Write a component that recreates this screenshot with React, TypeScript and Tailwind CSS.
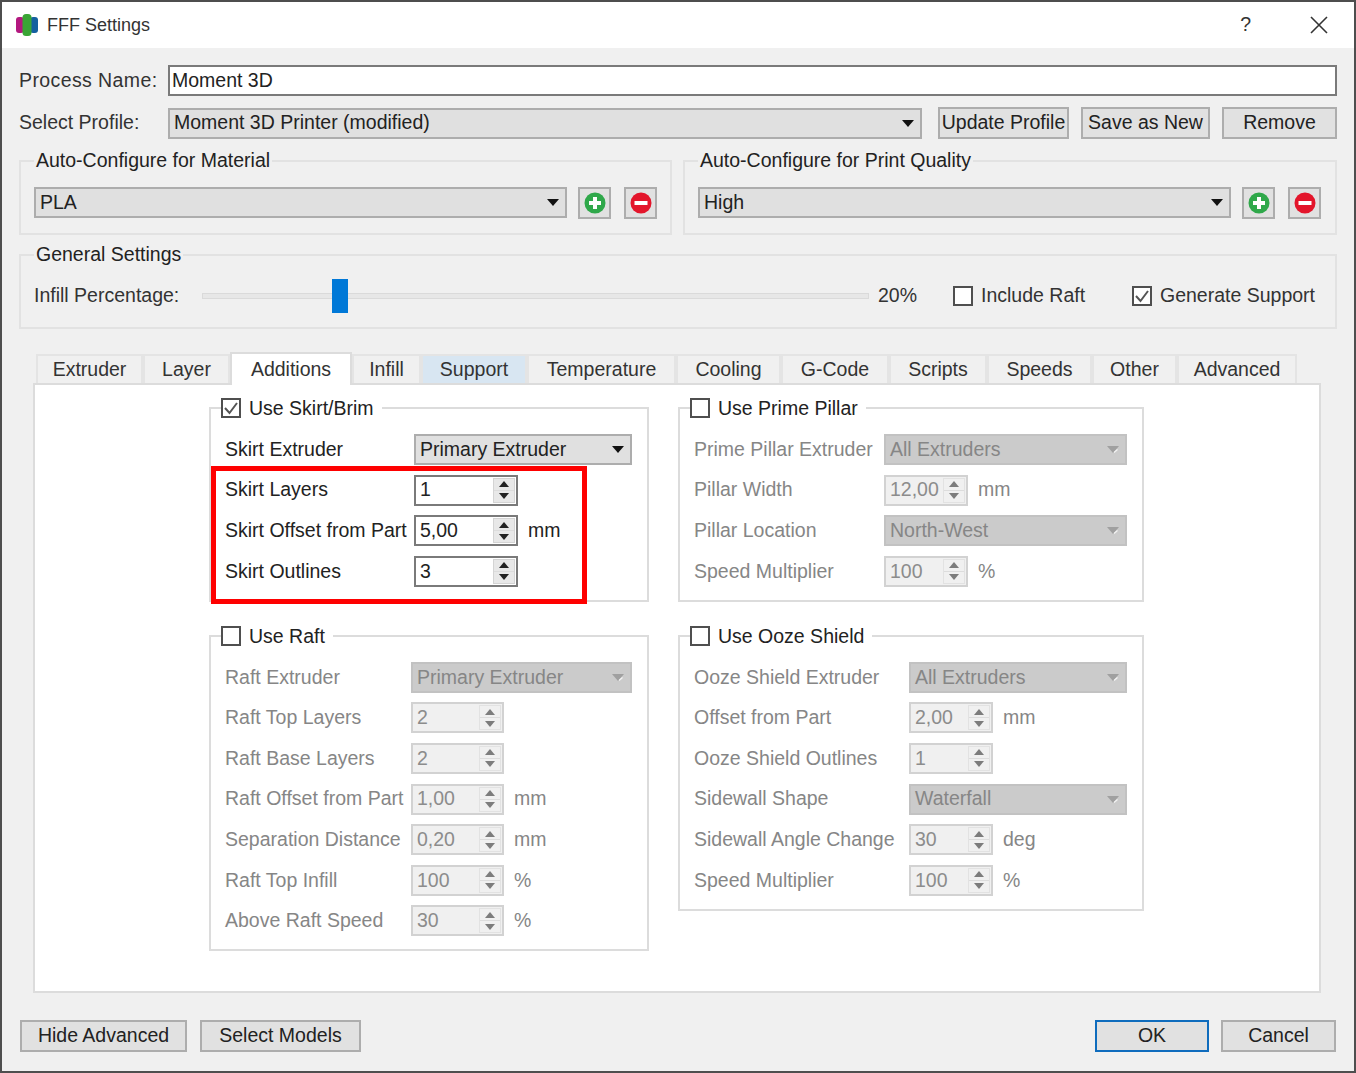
const font = "[font-family:'Liberation_Sans',sans-serif]";

function Caret({ disabled }: { disabled?: boolean }) {
  return (
    <svg width="12" height="7" viewBox="0 0 12 7" className="shrink-0">
      <path d="M0 0h12L6 7z" fill={disabled ? "#a0a0a0" : "#111"} />
      {disabled && <path d="M7 6.5l3.5-3" stroke="#f4f4f4" strokeWidth="1.2" />}
    </svg>
  );
}

function Combo({ value, width, disabled }: { value: string; width: string; disabled?: boolean }) {
  return (
    <div
      className={`flex h-[31px] ${width} items-center justify-between border-2 pl-[4px] pr-[6px] ${
        disabled ? "border-[#c2c2c2] bg-[#cbcbcb] text-[#868686]" : "border-[#adadad] bg-[#e0e0e0] text-[#222]"
      }`}
    >
      <span>{value}</span>
      <Caret disabled={disabled} />
    </div>
  );
}

function Spin({ value, width, disabled }: { value: string; width: string; disabled?: boolean }) {
  const arrow = disabled ? "#7c7c7c" : "#222";
  return (
    <div
      className={`flex h-[31px] ${width} items-center justify-between border-2 pl-[4px] ${
        disabled ? "border-[#d2d2d2] bg-[#f0f0f0] text-[#8c8c8c]" : "border-[#7a7a7a] bg-white text-[#222]"
      }`}
    >
      <span>{value}</span>
      <div className={`mr-[1px] flex h-[25px] w-[22px] flex-col border ${disabled ? "border-[#e2e2e2] bg-[#f0f0f0]" : "border-[#d4d4d4] bg-[#e8e8e8]"}`}>
        <div className="flex flex-1 items-center justify-center border-b border-[#dcdcdc]">
          <svg width="10" height="6" viewBox="0 0 10 6">
            <path d="M5 0l5 6H0z" fill={arrow} />
          </svg>
        </div>
        <div className="flex flex-1 items-center justify-center">
          <svg width="10" height="6" viewBox="0 0 10 6">
            <path d="M0 0h10L5 6z" fill={arrow} />
          </svg>
        </div>
      </div>
    </div>
  );
}

function Check({ checked }: { checked?: boolean }) {
  return (
    <span className="flex h-[20px] w-[20px] shrink-0 items-center justify-center border-2 border-[#4f4f4f] bg-white">
      {checked && (
        <svg width="16" height="14" viewBox="0 0 16 14">
          <path d="M2 7l4.5 5L14 2" fill="none" stroke="#555" strokeWidth="2" />
        </svg>
      )}
    </span>
  );
}

function RoundIcon({ plus }: { plus?: boolean }) {
  return (
    <div className={`flex h-[32px] w-[33px] items-center justify-center border-2 border-[#adadad] bg-[#e1e1e1] ${plus ? "" : "ml-[2px]"}`}>
      <svg width="22" height="22" viewBox="0 0 22 22">
        <circle cx="11" cy="11" r="10.5" fill={plus ? "#2fa84a" : "#e3152b"} />
        {plus ? <path d="M11 5v12M5 11h12" stroke="#fff" strokeWidth="4" /> : <path d="M4.5 11h13" stroke="#fff" strokeWidth="4" />}
      </svg>
    </div>
  );
}

function Button({ label, width, primary }: { label: string; width: string; primary?: boolean }) {
  return (
    <div
      className={`flex h-[32px] ${width} items-center justify-center whitespace-nowrap border-2 text-[#222] ${
        primary ? "border-[#0f6cbd] bg-[#e1e1e1]" : "border-[#adadad] bg-[#e1e1e1]"
      }`}
    >
      {label}
    </div>
  );
}

function Box({ legend, className, children }: { legend: string; className: string; children: React.ReactNode }) {
  return (
    <fieldset className={`border-2 border-[#e2e2e2] ${className}`}>
      <legend className="px-[2px] leading-[22px] text-[#222]">
        <span className="relative -top-[1px]">{legend}</span>
      </legend>
      {children}
    </fieldset>
  );
}

type Row = { label: string; kind: "combo" | "spin"; value: string; unit?: string };

function Group({
  title,
  checked,
  disabled,
  width,
  labelWidth,
  comboWidth,
  spinWidth,
  rows,
}: {
  title: string;
  checked?: boolean;
  disabled?: boolean;
  width: string;
  labelWidth: string;
  comboWidth: string;
  spinWidth: string;
  rows: Row[];
}) {
  const tone = disabled ? "text-[#868686]" : "text-[#222]";
  return (
    <fieldset className={`border-2 border-[#dcdcdc] pb-[13px] pl-[14px] ${width}`}>
      <legend className="-ml-[4px] flex items-center gap-[8px] pr-[8px] leading-[22px] text-[#222]">
        <Check checked={checked} />
        {title}
      </legend>
      <div className="mt-[15px] flex flex-col gap-[9.6px]">
        {rows.map((r) => (
          <div key={r.label} className="flex h-[31px] items-center">
            <span className={`${labelWidth} shrink-0 whitespace-nowrap ${tone}`}>{r.label}</span>
            {r.kind === "combo" ? (
              <Combo value={r.value} width={comboWidth} disabled={disabled} />
            ) : (
              <Spin value={r.value} width={spinWidth} disabled={disabled} />
            )}
            {r.unit && <span className={`ml-[10px] ${tone}`}>{r.unit}</span>}
          </div>
        ))}
      </div>
    </fieldset>
  );
}

const tabs = [
  { label: "Extruder", w: "w-[107px]" },
  { label: "Layer", w: "w-[87px]" },
  { label: "Additions", w: "w-[122px]", active: true },
  { label: "Infill", w: "w-[69px]" },
  { label: "Support", w: "w-[106px]", hot: true },
  { label: "Temperature", w: "w-[149px]" },
  { label: "Cooling", w: "w-[105px]" },
  { label: "G-Code", w: "w-[108px]" },
  { label: "Scripts", w: "w-[98px]" },
  { label: "Speeds", w: "w-[105px]" },
  { label: "Other", w: "w-[85px]" },
  { label: "Advanced", w: "w-[120px]" },
];

export default function App() {
  return (
    <div className={`flex h-[1073px] w-[1356px] flex-col border-2 border-[#4e4e4e] bg-[#f0f0f0] text-[19.5px] leading-none ${font}`}>
      <div className="flex h-[46px] shrink-0 items-center bg-white pl-[13px] pr-[26px] text-[#333]">
        <svg width="24" height="24" viewBox="0 0 24 24" className="shrink-0">
          <rect x="1" y="4" width="8" height="16" rx="3" fill="#b3187f" />
          <rect x="15" y="4" width="8" height="16" rx="3" fill="#14609f" />
          <rect x="7.5" y="1" width="9" height="22" rx="3.5" fill="#3aa535" />
        </svg>
        <span className="ml-[8px] text-[18px]">FFF Settings</span>
        <span className="ml-auto text-[#333]">?</span>
        <svg width="18" height="18" viewBox="0 0 18 18" className="ml-[59px]">
          <path d="M1 1l16 16M17 1L1 17" stroke="#333" strokeWidth="1.6" />
        </svg>
      </div>

      <div className="flex flex-1 flex-col pl-[17px] pr-[17px] pt-[17px]">
        <div className="flex h-[31px] items-center">
          <span className="w-[149px] tracking-[0.4px] text-[#333]">Process Name:</span>
          <div className="flex h-[31px] flex-1 items-center border-2 border-[#7a7a7a] bg-white pl-[2px] text-[#222]">Moment 3D</div>
        </div>
        <div className="mt-[11px] flex h-[32px] items-center">
          <span className="w-[149px] text-[#333]">Select Profile:</span>
          <Combo value="Moment 3D Printer (modified)" width="w-[754px]" />
          <div className="ml-[16px]"><Button label="Update Profile" width="w-[131px]" /></div>
          <div className="ml-[12px]"><Button label="Save as New" width="w-[129px]" /></div>
          <div className="ml-[12px]"><Button label="Remove" width="w-[115px]" /></div>
        </div>

        <div className="mt-[11px] flex gap-[11px]">
          <Box legend="Auto-Configure for Material" className="h-[85px] w-[653px] pl-[13px] pr-[13px]">
            <div className="mt-[15px] flex gap-[11px]">
              <Combo value="PLA" width="w-[533px]" />
              <RoundIcon plus />
              <RoundIcon />
            </div>
          </Box>
          <Box legend="Auto-Configure for Print Quality" className="h-[85px] w-[654px] pl-[13px] pr-[13px]">
            <div className="mt-[15px] flex gap-[11px]">
              <Combo value="High" width="w-[533px]" />
              <RoundIcon plus />
              <RoundIcon />
            </div>
          </Box>
        </div>

        <Box legend="General Settings" className="mt-[9px] h-[85px] w-[1318px] pl-[13px]">
          <div className="mt-[13px] flex h-[34px] items-center text-[#333]">
            <span className="w-[168px]">Infill Percentage:</span>
            <div className="relative flex h-[34px] w-[667px] items-center">
              <div className="h-[6px] w-full border border-[#dadada] bg-[#e7e7e7]" />
              <div className="absolute left-[130px] top-0 h-[34px] w-[16px] bg-[#0078d7]" />
            </div>
            <span className="ml-[9px] w-[75px]">20%</span>
            <Check />
            <span className="ml-[8px] w-[151px]">Include Raft</span>
            <Check checked />
            <span className="ml-[8px]">Generate Support</span>
          </div>
        </Box>

        <div className="ml-[17px] mt-[23px] flex h-[31px] items-end">
          {tabs.map((t) => (
            <div
              key={t.label}
              className={`flex items-center justify-center border-2 border-b-0 text-[#333] ${t.w} ${
                t.active
                  ? "relative z-10 -mb-[2px] h-[33px] border-[#dcdcdc] bg-white"
                  : t.hot
                    ? "h-[29px] border-[#e4e4e4] bg-[#d8e6f2]"
                    : "h-[29px] border-[#e4e4e4] bg-[#f0f0f0]"
              }`}
            >
              {t.label}
            </div>
          ))}
        </div>

        <div className="relative ml-[14px] flex h-[610px] w-[1288px] gap-[29px] border-2 border-[#dcdcdc] bg-white pl-[174px] pt-[12px]">
          <div className="flex flex-col gap-[23px]">
            <Group
              title="Use Skirt/Brim"
              checked
              width="w-[440px]"
              labelWidth="w-[189px]"
              comboWidth="w-[218px]"
              spinWidth="w-[104px]"
              rows={[
                { label: "Skirt Extruder", kind: "combo", value: "Primary Extruder" },
                { label: "Skirt Layers", kind: "spin", value: "1" },
                { label: "Skirt Offset from Part", kind: "spin", value: "5,00", unit: "mm" },
                { label: "Skirt Outlines", kind: "spin", value: "3" },
              ]}
            />
            <Group
              title="Use Raft"
              disabled
              width="w-[440px]"
              labelWidth="w-[186px]"
              comboWidth="w-[221px]"
              spinWidth="w-[93px]"
              rows={[
                { label: "Raft Extruder", kind: "combo", value: "Primary Extruder" },
                { label: "Raft Top Layers", kind: "spin", value: "2" },
                { label: "Raft Base Layers", kind: "spin", value: "2" },
                { label: "Raft Offset from Part", kind: "spin", value: "1,00", unit: "mm" },
                { label: "Separation Distance", kind: "spin", value: "0,20", unit: "mm" },
                { label: "Raft Top Infill", kind: "spin", value: "100", unit: "%" },
                { label: "Above Raft Speed", kind: "spin", value: "30", unit: "%" },
              ]}
            />
          </div>
          <div className="flex flex-col gap-[23px]">
            <Group
              title="Use Prime Pillar"
              disabled
              width="w-[466px]"
              labelWidth="w-[190px]"
              comboWidth="w-[243px]"
              spinWidth="w-[84px]"
              rows={[
                { label: "Prime Pillar Extruder", kind: "combo", value: "All Extruders" },
                { label: "Pillar Width", kind: "spin", value: "12,00", unit: "mm" },
                { label: "Pillar Location", kind: "combo", value: "North-West" },
                { label: "Speed Multiplier", kind: "spin", value: "100", unit: "%" },
              ]}
            />
            <Group
              title="Use Ooze Shield"
              disabled
              width="w-[466px]"
              labelWidth="w-[215px]"
              comboWidth="w-[218px]"
              spinWidth="w-[84px]"
              rows={[
                { label: "Ooze Shield Extruder", kind: "combo", value: "All Extruders" },
                { label: "Offset from Part", kind: "spin", value: "2,00", unit: "mm" },
                { label: "Ooze Shield Outlines", kind: "spin", value: "1" },
                { label: "Sidewall Shape", kind: "combo", value: "Waterfall" },
                { label: "Sidewall Angle Change", kind: "spin", value: "30", unit: "deg" },
                { label: "Speed Multiplier", kind: "spin", value: "100", unit: "%" },
              ]}
            />
          </div>
          <div className="pointer-events-none absolute left-[176px] top-[81px] h-[138px] w-[376px] border-[5px] border-[#fe0000]" />
        </div>

        <div className="mt-[27px] flex">
          <div className="ml-[1px]"><Button label="Hide Advanced" width="w-[167px]" /></div>
          <div className="ml-[13px]"><Button label="Select Models" width="w-[161px]" /></div>
          <div className="ml-auto"><Button label="OK" width="w-[114px]" primary /></div>
          <div className="ml-[12px] mr-[1px]"><Button label="Cancel" width="w-[115px]" /></div>
        </div>
      </div>
    </div>
  );
}
